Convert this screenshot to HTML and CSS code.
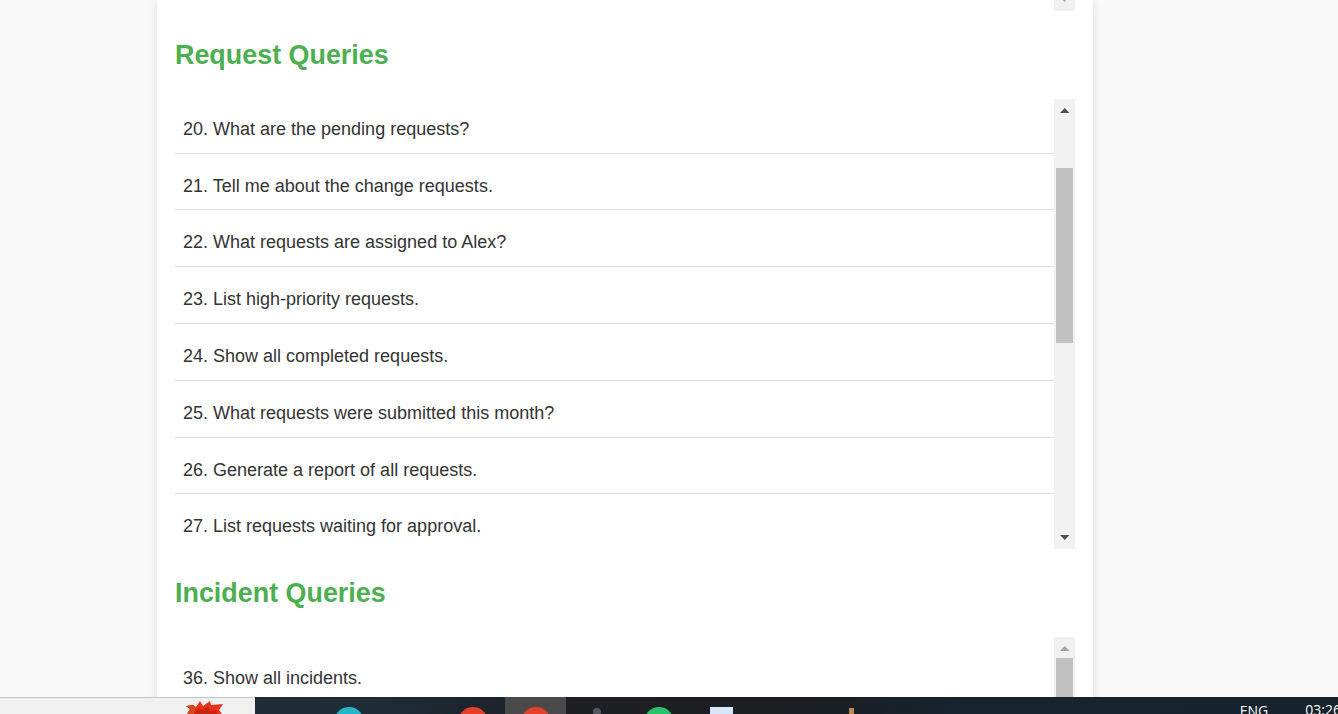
FILE: index.html
```html
<!DOCTYPE html>
<html lang="en">
<head>
<meta charset="utf-8">
<title>Query Examples</title>
<link rel="stylesheet" href="styles.css">
</head>
<body>
<main class="page">
  <div class="card">
    <div class="stub">
      <div class="bar bar-stub"><svg class="arrow" width="21" height="11" viewBox="0 0 21 11"><path d="M8 -1h5l-2.500 3z" fill="#a3a3a3"/></svg></div>
    </div>
    <h2 class="heading heading-first">Request Queries</h2>
    <section class="box box-request">
      <ul class="list">
        <li class="row">20. What are the pending requests?</li>
        <li class="row">21. Tell me about the change requests.</li>
        <li class="row">22. What requests are assigned to Alex?</li>
        <li class="row">23. List high-priority requests.</li>
        <li class="row">24. Show all completed requests.</li>
        <li class="row">25. What requests were submitted this month?</li>
        <li class="row">26. Generate a report of all requests.</li>
        <li class="row row-last">27. List requests waiting for approval.</li>
      </ul>
      <div class="bar">
        <svg class="arrow arrow-up" width="21" height="17" viewBox="0 0 21 17"><path d="M6 14h9.500l-4.750-5z" fill="#505050"/></svg>
        <div class="thumb thumb-request"></div>
        <svg class="arrow arrow-down" width="21" height="17" viewBox="0 0 21 17"><path d="M6 3h9.500l-4.750 5z" fill="#505050"/></svg>
      </div>
    </section>
    <h2 class="heading heading-second">Incident Queries</h2>
    <section class="box box-incident">
      <ul class="list list-incident">
        <li class="row">36. Show all incidents.</li>
      </ul>
      <div class="bar">
        <svg class="arrow arrow-up-dim" width="21" height="21" viewBox="0 0 21 21"><path d="M6 14h9.500l-4.750-5z" fill="#a3a3a3"/></svg>
        <div class="thumb thumb-incident"></div>
      </div>
    </section>
  </div>
</main>
<footer class="taskbar">
  <div class="download-shelf">
    <svg class="burst" width="38" height="13" viewBox="0 0 38 13"><path d="M0 5l7-1 3 2 4-6 3 5 7-5 1 4 12-1-4 6 3 4H1l3-5z" fill="#e8321c"/><path d="M0 5l7-1 3 2-2 7H1l3-5z" fill="#d8481a"/><path d="M8 13l4-6 4 2 6-3 2 4 6-1 1 4z" fill="#c9240f"/></svg>
  </div>
  <div class="tasks">
    <div class="task task-spacer"></div>
    <div class="task"><span class="dot dot-teal"></span></div>
    <div class="task"></div>
    <div class="task"><span class="dot dot-red"></span></div>
    <div class="task task-active"><span class="dot dot-red"></span></div>
    <div class="task"><span class="dot dot-grey"></span></div>
    <div class="task"><span class="dot dot-green"></span></div>
    <div class="task"><span class="doc"></span></div>
    <div class="task"></div>
    <div class="task"><span class="tip"></span></div>
  </div>
  <div class="tray">
    <span class="lang">ENG</span>
    <span class="clock">03:26</span>
  </div>
</footer>
</body>
</html>
```

FILE: styles.css
```css
html, body {
  height: 100%;
}

body {
  margin: 0;
  display: flex;
  flex-direction: column;
  height: 100vh;
  overflow: hidden;
  background: #f9f9f9;
  font-family: "Liberation Sans", Arial, sans-serif;
  color: #333;
}

.page {
  flex: 1;
  min-height: 0;
  overflow: hidden;
  padding-left: 157px;
}

.card {
  box-sizing: border-box;
  width: 936px;
  padding: 0 18px;
  background: #fff;
  box-shadow: 0 0 10px rgba(0, 0, 0, 0.1);
  min-height: 100%;
}

.stub {
  display: flex;
  justify-content: flex-end;
  height: 11px;
}

.bar {
  position: relative;
  flex: none;
  width: 21px;
  background: #f1f1f1;
}

.bar-stub {
  height: 11px;
}

.arrow {
  display: block;
}

.arrow-up,
.arrow-up-dim {
  position: absolute;
  top: 0;
  left: 0;
}

.arrow-down {
  position: absolute;
  bottom: 0;
  left: 0;
}

.thumb {
  position: absolute;
  left: 2px;
  width: 17px;
  background: #c1c1c1;
}

.thumb-request {
  top: 69px;
  height: 175px;
}

.thumb-incident {
  top: 21px;
  height: 200px;
}

.heading {
  margin: 0;
  font-size: 26.9px;
  line-height: 32px;
  font-weight: 700;
  color: #4caf50;
}

.heading-first {
  margin-top: 28px;
  margin-bottom: 28px;
}

.heading-second {
  margin-top: 28px;
  margin-bottom: 28px;
}

.box {
  display: flex;
  overflow: hidden;
}

.box-request {
  height: 450px;
}

.box-incident {
  height: 300px;
}

.list {
  flex: 1;
  min-width: 0;
  margin: -2.2px 0 0;
  padding: 0;
  list-style: none;
  overflow: hidden;
}

.list-incident {
  margin-top: 0;
  padding-top: 9px;
}

.row {
  box-sizing: border-box;
  height: 56.8px;
  padding: 19px 8px 0;
  font-size: 18px;
  line-height: 26px;
  border-bottom: 1px solid #ddd;
}

.row-last {
  border-bottom: 0;
}

.taskbar {
  flex: none;
  display: flex;
  height: 17px;
  overflow: hidden;
  background: linear-gradient(90deg, #1d2b37 0%, #1e2c38 28%, #1d1f22 43%, #1c1e21 58%, #17232e 72%, #16222c 100%);
}

.download-shelf {
  box-sizing: border-box;
  flex: none;
  width: 255px;
  padding-left: 186px;
  background: #f0f0f0;
  border-top: 1px solid #c4c4c4;
}

.burst {
  display: block;
  margin-top: 3px;
}

.tasks {
  display: flex;
}

.task {
  box-sizing: border-box;
  display: flex;
  justify-content: center;
  flex: none;
  width: 62px;
  padding-top: 10px;
}

.task-spacer {
  width: 63px;
}

.task-active {
  margin-left: 1px;
  width: 61px;
  background: #4a4a4a;
}

.dot {
  flex: none;
  width: 30px;
  height: 30px;
  border-radius: 50%;
}

.dot-teal {
  background: #27b5c9;
}

.dot-red {
  background: #e5402a;
}

.dot-grey {
  width: 8px;
  height: 8px;
  margin-top: 1px;
  background: #55585c;
}

.dot-green {
  background: #2bc16b;
}

.doc {
  flex: none;
  width: 23px;
  height: 24px;
  background: #d8e6fa;
}

.tip {
  flex: none;
  width: 5px;
  height: 10px;
  margin: 1px 0 0 12px;
  background: #b98a52;
}

.tray {
  flex: 1;
  display: flex;
  justify-content: flex-end;
  color: #fff;
  font-family: "Open Sans", sans-serif;
  font-size: 14px;
  line-height: 17px;
}

.lang {
  margin-top: 5px;
  margin-right: 37px;
}

.clock {
  margin-top: 4px;
  margin-right: -3px;
}
```
